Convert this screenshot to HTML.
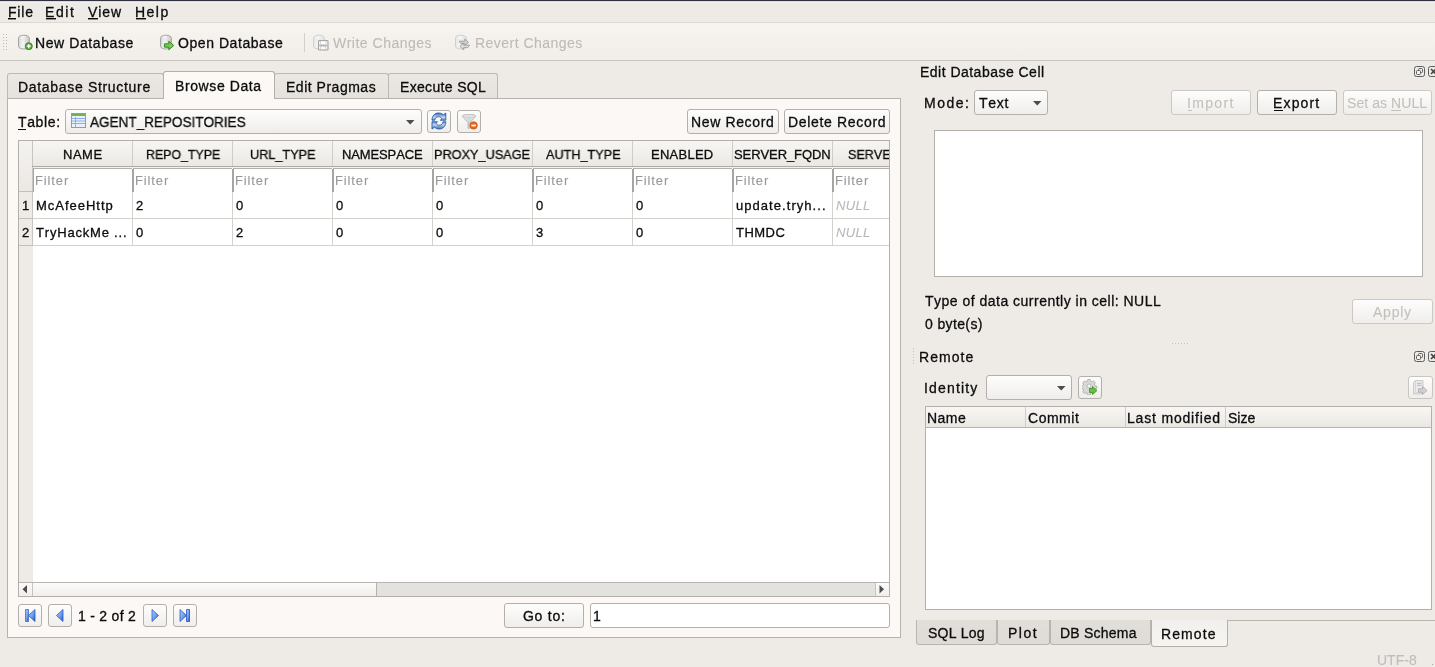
<!DOCTYPE html>
<html><head><meta charset="utf-8"><title>DB Browser for SQLite</title>
<style>
html,body{margin:0;padding:0;}
body{width:1435px;height:667px;overflow:hidden;position:relative;background:#eeebe7;font-family:"Liberation Sans",sans-serif;font-size:14px;line-height:16px;color:#0c0c0c;font-kerning:none;}
body div, body svg{position:absolute;box-sizing:border-box;}
.t{position:absolute;white-space:pre;will-change:transform;-webkit-text-stroke:0.3px currentColor;}
</style></head><body>
<div style="left:0px;top:0px;width:1435px;height:1px;background:#2f3140"></div>
<div style="left:0px;top:1px;width:1435px;height:1px;background:#dfdcd8"></div>
<div style="left:0px;top:2px;width:1435px;height:1px;background:#f2efeb"></div>
<div style="left:0px;top:3px;width:1435px;height:19px;background:#eeebe7"></div>
<div style="left:0px;top:22px;width:1435px;height:1px;background:#dcd8d3"></div>
<div style="left:0px;top:23px;width:1435px;height:37px;background:linear-gradient(#f7f4f0,#f1eeea)"></div>
<div style="left:0px;top:60px;width:1435px;height:1px;background:#c9c5c0"></div>
<span class="t" style="left:7.65px;top:4.00px;color:#0c0c0c;letter-spacing:0.804px;">File</span>
<div style="left:8px;top:18px;width:8px;height:1px;background:#0c0c0c"></div>
<div style="left:8px;top:19px;width:8px;height:1px;background:#8a8a8a"></div>
<span class="t" style="left:45.25px;top:4.00px;color:#0c0c0c;letter-spacing:1.576px;">Edit</span>
<div style="left:46px;top:18px;width:10px;height:1px;background:#0c0c0c"></div>
<div style="left:46px;top:19px;width:10px;height:1px;background:#8a8a8a"></div>
<span class="t" style="left:87.74px;top:4.00px;color:#0c0c0c;letter-spacing:0.961px;">View</span>
<div style="left:88px;top:18px;width:10px;height:1px;background:#0c0c0c"></div>
<div style="left:88px;top:19px;width:10px;height:1px;background:#8a8a8a"></div>
<span class="t" style="left:134.85px;top:4.00px;color:#0c0c0c;letter-spacing:1.481px;">Help</span>
<div style="left:136px;top:18px;width:10px;height:1px;background:#0c0c0c"></div>
<div style="left:136px;top:19px;width:10px;height:1px;background:#8a8a8a"></div>
<div style="left:3px;top:34px;width:1px;height:1px;background:#bcb8b3"></div>
<div style="left:6px;top:34px;width:1px;height:1px;background:#bcb8b3"></div>
<div style="left:3px;top:37px;width:1px;height:1px;background:#bcb8b3"></div>
<div style="left:6px;top:37px;width:1px;height:1px;background:#bcb8b3"></div>
<div style="left:3px;top:40px;width:1px;height:1px;background:#bcb8b3"></div>
<div style="left:6px;top:40px;width:1px;height:1px;background:#bcb8b3"></div>
<div style="left:3px;top:43px;width:1px;height:1px;background:#bcb8b3"></div>
<div style="left:6px;top:43px;width:1px;height:1px;background:#bcb8b3"></div>
<div style="left:3px;top:46px;width:1px;height:1px;background:#bcb8b3"></div>
<div style="left:6px;top:46px;width:1px;height:1px;background:#bcb8b3"></div>
<div style="left:3px;top:49px;width:1px;height:1px;background:#bcb8b3"></div>
<div style="left:6px;top:49px;width:1px;height:1px;background:#bcb8b3"></div>
<svg width="17" height="17" viewBox="0 0 17 17" style="position:absolute;left:17px;top:34px">
<defs><linearGradient id="cg1" x1="0" x2="1"><stop offset="0" stop-color="#d4d4d4"/><stop offset=".4" stop-color="#f6f6f6"/><stop offset="1" stop-color="#c4c4c4"/></linearGradient></defs>
<path d="M1.5 3.8 v8.6 c0 1.5 2.4 2.6 5.4 2.6 s5.4 -1.1 5.4 -2.6 v-8.6 c0 -1.5 -2.4 -2.6 -5.4 -2.6 s-5.4 1.1 -5.4 2.6z" fill="url(#cg1)" stroke="#a6a6a6" stroke-width="1"/>
<path d="M2 4.2 c0.8 1.2 2.6 1.7 4.9 1.7 s4.1 -0.5 4.9 -1.7" fill="none" stroke="#dcdcdc" stroke-width=".6"/>
<circle cx="11.8" cy="12.2" r="3.5" fill="#58a83a" stroke="#2f7d1c" stroke-width=".8"/><path d="M11.8 10.1v4.2M9.7 12.2h4.2" stroke="#fff" stroke-width="1.3"/></svg>
<span class="t" style="left:35.35px;top:35.00px;color:#0c0c0c;letter-spacing:0.595px;">New Database</span>
<svg width="17" height="17" viewBox="0 0 17 17" style="position:absolute;left:159px;top:34px">
<defs><linearGradient id="cg2" x1="0" x2="1"><stop offset="0" stop-color="#d4d4d4"/><stop offset=".4" stop-color="#f6f6f6"/><stop offset="1" stop-color="#c4c4c4"/></linearGradient></defs>
<path d="M1.5 3.8 v8.6 c0 1.5 2.4 2.6 5.4 2.6 s5.4 -1.1 5.4 -2.6 v-8.6 c0 -1.5 -2.4 -2.6 -5.4 -2.6 s-5.4 1.1 -5.4 2.6z" fill="url(#cg2)" stroke="#a6a6a6" stroke-width="1"/>
<path d="M2 4.2 c0.8 1.2 2.6 1.7 4.9 1.7 s4.1 -0.5 4.9 -1.7" fill="none" stroke="#dcdcdc" stroke-width=".6"/>
<path d="M5.5 9.8h4.3v-2.6l5 4.3-5 4.3v-2.6h-4.3z" fill="#7cc65a" stroke="#2e8d1a" stroke-width="1" stroke-linejoin="round"/></svg>
<span class="t" style="left:177.84px;top:35.00px;color:#0c0c0c;letter-spacing:0.560px;">Open Database</span>
<div style="left:304px;top:33px;width:1px;height:19px;background:#d2cec9"></div>
<svg width="17" height="17" viewBox="0 0 17 17" style="position:absolute;left:312px;top:34px">
<defs><linearGradient id="cg3" x1="0" x2="1"><stop offset="0" stop-color="#e6e6e6"/><stop offset=".4" stop-color="#f6f6f6"/><stop offset="1" stop-color="#e0e0e0"/></linearGradient></defs>
<path d="M1.5 3.8 v8.6 c0 1.5 2.4 2.6 5.4 2.6 s5.4 -1.1 5.4 -2.6 v-8.6 c0 -1.5 -2.4 -2.6 -5.4 -2.6 s-5.4 1.1 -5.4 2.6z" fill="url(#cg3)" stroke="#cfcfcf" stroke-width="1"/>
<path d="M2 4.2 c0.8 1.2 2.6 1.7 4.9 1.7 s4.1 -0.5 4.9 -1.7" fill="none" stroke="#e6e6e6" stroke-width=".6"/>
<rect x="6.5" y="6.5" width="9.5" height="9.5" rx=".8" fill="#f4f4f4" stroke="#a4a4a4" stroke-width="1.1"/><rect x="8.6" y="7" width="5.4" height="3.4" fill="#fff" stroke="#bcbcbc" stroke-width=".5"/><rect x="8.8" y="12.4" width="5" height="3" fill="#fff" stroke="#b4b4b4" stroke-width=".6"/><rect x="6.5" y="10.8" width="9.5" height="1.2" fill="#b9b9b9"/></svg>
<span class="t" style="left:333.44px;top:35.00px;color:#bdb9b4;letter-spacing:0.498px;-webkit-text-stroke:0.1px currentColor;">Write Changes</span>
<svg width="17" height="17" viewBox="0 0 17 17" style="position:absolute;left:454px;top:34px">
<defs><linearGradient id="cg4" x1="0" x2="1"><stop offset="0" stop-color="#e6e6e6"/><stop offset=".4" stop-color="#f6f6f6"/><stop offset="1" stop-color="#e0e0e0"/></linearGradient></defs>
<path d="M1.5 3.8 v8.6 c0 1.5 2.4 2.6 5.4 2.6 s5.4 -1.1 5.4 -2.6 v-8.6 c0 -1.5 -2.4 -2.6 -5.4 -2.6 s-5.4 1.1 -5.4 2.6z" fill="url(#cg4)" stroke="#cfcfcf" stroke-width="1"/>
<path d="M2 4.2 c0.8 1.2 2.6 1.7 4.9 1.7 s4.1 -0.5 4.9 -1.7" fill="none" stroke="#e6e6e6" stroke-width=".6"/>
<path d="M5 7.2 h5.8 v-2.2 l3.8 3.4 -3.8 3.4 v-2.2 h-4 z" fill="#cfcfcf" stroke="#a2a2a2" stroke-width=".9" stroke-linejoin="round"/><path d="M15.5 11.2 h-5.8 v-2.2 l-3.8 3.4 3.8 3.4 v-2.2 h4 z" fill="#e0e0e0" stroke="#9a9a9a" stroke-width=".9" stroke-linejoin="round"/></svg>
<span class="t" style="left:474.55px;top:35.00px;color:#bdb9b4;letter-spacing:0.476px;-webkit-text-stroke:0.1px currentColor;">Revert Changes</span>
<div style="left:7px;top:98px;width:894px;height:540px;border:1px solid #b5b1ac;background:#fbf8f5"></div>
<div style="left:7px;top:73px;width:157px;height:25px;border:1px solid #bcb8b3;border-bottom:none;border-radius:3px 3px 0 0;background:linear-gradient(#ebe8e4,#e5e2de);"></div>
<div style="left:274px;top:73px;width:115px;height:25px;border:1px solid #bcb8b3;border-bottom:none;border-radius:3px 3px 0 0;background:linear-gradient(#ebe8e4,#e5e2de);"></div>
<div style="left:388px;top:73px;width:110px;height:25px;border:1px solid #bcb8b3;border-bottom:none;border-radius:3px 3px 0 0;background:linear-gradient(#ebe8e4,#e5e2de);"></div>
<div style="left:163px;top:71px;width:112px;height:28px;border:1px solid #b3afaa;border-bottom:none;border-radius:3px 3px 0 0;background:#fbf8f5"></div>
<span class="t" style="left:18.45px;top:79.00px;color:#0c0c0c;letter-spacing:0.679px;">Database Structure</span>
<span class="t" style="left:174.85px;top:78.00px;color:#0c0c0c;letter-spacing:0.600px;">Browse Data</span>
<span class="t" style="left:285.85px;top:79.00px;color:#0c0c0c;letter-spacing:0.511px;">Edit Pragmas</span>
<span class="t" style="left:399.65px;top:79.00px;color:#0c0c0c;letter-spacing:0.332px;">Execute SQL</span>
<span class="t" style="left:17.89px;top:114.00px;color:#0c0c0c;letter-spacing:0.637px;">Table:</span>
<div style="left:18px;top:129px;width:8px;height:1px;background:#0c0c0c"></div>
<div style="left:65px;top:109px;width:357px;height:25px;border:1px solid #b3afaa;border-radius:3px;background:linear-gradient(#fdfdfc,#efedea)"></div>
<svg width="15" height="15" viewBox="0 0 15 15" style="position:absolute;left:71px;top:113px">
<rect x=".5" y=".5" width="14" height="14" fill="#e8f0fb" stroke="#7a9fd6"/>
<rect x="1" y="1" width="13" height="2" fill="#6cb35a"/>
<path d="M1 5.5h13M1 8h13M1 10.5h13M4.5 4v10" stroke="#8fb0e0" stroke-width="1"/>
</svg>
<span class="t" style="left:89.97px;top:114.00px;color:#0c0c0c;transform:scaleX(0.9665);transform-origin:0 0;">AGENT_REPOSITORIES</span>
<svg width="9" height="5" style="position:absolute;left:406px;top:120px"><path d="M0 0h8.5L4.25 4.5z" fill="#4d4d4d"/></svg>
<div style="left:427px;top:110px;width:24px;height:23px;border:1px solid #b3afaa;border-radius:3px;background:linear-gradient(#fdfdfd,#f0eeeb);"></div>
<svg width="18" height="18" viewBox="0 0 18 18" style="position:absolute;left:431px;top:112px">
<defs><linearGradient id="rg1" x1="0" y1="0" x2="0" y2="1"><stop offset="0" stop-color="#3569b4"/><stop offset=".6" stop-color="#c4d7f0"/><stop offset="1" stop-color="#5a8cca"/></linearGradient>
<linearGradient id="rg2" x1="0" y1="1" x2="0" y2="0"><stop offset="0" stop-color="#2d62b0"/><stop offset=".55" stop-color="#b9d0ee"/><stop offset="1" stop-color="#3d72bd"/></linearGradient></defs>
<path d="M1 8.2 C1 3.7 4 1 7.5 1 C9.5 1 11 1.7 12.3 2.8 L14.8 1 V8.2 H9.3 L10.9 6.7 C10 5.5 8.8 4.7 7.5 4.7 C5.6 4.7 4 6.1 3.7 8.2 Z" fill="url(#rg1)" stroke="#2a5ea8" stroke-width=".9" stroke-linejoin="round"/>
<path transform="rotate(180 7.9 9)" d="M1 8.2 C1 3.7 4 1 7.5 1 C9.5 1 11 1.7 12.3 2.8 L14.8 1 V8.2 H9.3 L10.9 6.7 C10 5.5 8.8 4.7 7.5 4.7 C5.6 4.7 4 6.1 3.7 8.2 Z" fill="url(#rg1)" stroke="#2a5ea8" stroke-width=".9" stroke-linejoin="round"/>
</svg>
<div style="left:457px;top:110px;width:24px;height:23px;border:1px solid #b3afaa;border-radius:3px;background:linear-gradient(#fdfdfd,#f0eeeb);"></div>
<svg width="18" height="18" viewBox="0 0 18 18" style="position:absolute;left:461px;top:113px">
<defs><linearGradient id="fg1" x1="0" x2="1"><stop offset="0" stop-color="#f2f2f2"/><stop offset=".5" stop-color="#d6d6d6"/><stop offset="1" stop-color="#f0f0f0"/></linearGradient></defs>
<path d="M1.2 3.2 C1.2 0.9 14.8 0.9 14.8 3.2 L9 9.5 V15.2 H7 V9.5 Z" fill="url(#fg1)" stroke="#b4b4b4" stroke-width=".9" stroke-linejoin="round"/>
<ellipse cx="8" cy="3.1" rx="6.3" ry="1.6" fill="#e2e2e2" stroke="#c4c4c4" stroke-width=".6"/>
<circle cx="12.6" cy="12.4" r="3.7" fill="#e86a1c" stroke="#c4520e" stroke-width=".7"/>
<rect x="10.4" y="11.7" width="4.4" height="1.6" fill="#fff"/>
</svg>
<div style="left:687px;top:109px;width:92px;height:25px;border:1px solid #b3afaa;border-radius:3px;background:linear-gradient(#fdfdfd,#f0eeeb);"></div>
<span class="t" style="left:690.95px;top:114.00px;color:#0c0c0c;letter-spacing:0.636px;">New Record</span>
<div style="left:784px;top:109px;width:106px;height:25px;border:1px solid #b3afaa;border-radius:3px;background:linear-gradient(#fdfdfd,#f0eeeb);"></div>
<span class="t" style="left:787.85px;top:114.00px;color:#0c0c0c;letter-spacing:0.672px;">Delete Record</span>
<div style="left:18px;top:140px;width:872px;height:457px;border:1px solid #b3afaa;background:#fff"></div>
<div style="left:19px;top:141px;width:14px;height:441px;background:#eeebe7"></div>
<div style="left:32px;top:141px;width:1px;height:105px;background:#c8c4bf"></div>
<div style="left:33px;top:141px;width:856px;height:25px;background:linear-gradient(#f8f6f3,#ebe8e4)"></div>
<div style="left:19px;top:166px;width:870px;height:1px;background:#aeaaa5"></div>
<div style="left:19px;top:141px;width:13px;height:50px;background:linear-gradient(#f4f2ef,#ebe8e4)"></div>
<div style="left:19px;top:191px;width:14px;height:1px;background:#c3bfba"></div>
<div style="left:132px;top:141px;width:1px;height:25px;background:#d0ccc7"></div>
<div style="left:232px;top:141px;width:1px;height:25px;background:#d0ccc7"></div>
<div style="left:332px;top:141px;width:1px;height:25px;background:#d0ccc7"></div>
<div style="left:432px;top:141px;width:1px;height:25px;background:#d0ccc7"></div>
<div style="left:532px;top:141px;width:1px;height:25px;background:#d0ccc7"></div>
<div style="left:632px;top:141px;width:1px;height:25px;background:#d0ccc7"></div>
<div style="left:732px;top:141px;width:1px;height:25px;background:#d0ccc7"></div>
<div style="left:832px;top:141px;width:1px;height:25px;background:#d0ccc7"></div>
<span class="t" style="left:62.53px;top:147.93px;color:#0c0c0c;font-size:13.00px;line-height:14.86px;letter-spacing:0.522px;">NAME</span>
<span class="t" style="left:145.59px;top:147.93px;color:#0c0c0c;font-size:13.00px;line-height:14.86px;transform:scaleX(0.9516);transform-origin:0 0;">REPO_TYPE</span>
<span class="t" style="left:250.02px;top:147.93px;color:#0c0c0c;font-size:13.00px;line-height:14.86px;transform:scaleX(0.9752);transform-origin:0 0;">URL_TYPE</span>
<span class="t" style="left:341.93px;top:147.93px;color:#0c0c0c;font-size:13.00px;line-height:14.86px;letter-spacing:-0.126px;">NAMESPACE</span>
<span class="t" style="left:434.46px;top:147.93px;color:#0c0c0c;font-size:13.00px;line-height:14.86px;transform:scaleX(0.9780);transform-origin:0 0;">PROXY_USAGE</span>
<span class="t" style="left:545.98px;top:147.93px;color:#0c0c0c;font-size:13.00px;line-height:14.86px;transform:scaleX(0.9738);transform-origin:0 0;">AUTH_TYPE</span>
<span class="t" style="left:651.43px;top:147.93px;color:#0c0c0c;font-size:13.00px;line-height:14.86px;letter-spacing:0.250px;">ENABLED</span>
<span class="t" style="left:734.41px;top:147.93px;color:#0c0c0c;font-size:13.00px;line-height:14.86px;letter-spacing:-0.087px;">SERVER_FQDN</span>
<div style="left:833px;top:141px;width:56px;height:25px;overflow:hidden">
<span class="t" style="left:14.93px;top:6.93px;color:#0c0c0c;font-size:13.00px;line-height:14.86px;transform:scaleX(0.9672);transform-origin:0 0;">SERVER_</span>
</div>
<div style="left:33px;top:167px;width:856px;height:1px;background:#f3f1ee"></div>
<div style="left:33px;top:168px;width:99px;height:24px;background:#fff"></div>
<div style="left:33px;top:168px;width:99px;height:1px;background:#b4b0ab"></div>
<div style="left:33px;top:169px;width:1px;height:23px;background:#a8a49f"></div>
<div style="left:33px;top:168px;width:99px;height:23px;overflow:hidden">
<span class="t" style="left:2.43px;top:5.93px;color:#999999;font-size:13.00px;line-height:14.86px;letter-spacing:0.879px;-webkit-text-stroke:0.1px currentColor;">Filter</span>
</div>
<div style="left:133px;top:168px;width:99px;height:24px;background:#fff"></div>
<div style="left:133px;top:168px;width:99px;height:1px;background:#b4b0ab"></div>
<div style="left:132px;top:169px;width:2px;height:23px;background:#a8a49f"></div>
<div style="left:133px;top:168px;width:99px;height:23px;overflow:hidden">
<span class="t" style="left:2.43px;top:5.93px;color:#999999;font-size:13.00px;line-height:14.86px;letter-spacing:0.879px;-webkit-text-stroke:0.1px currentColor;">Filter</span>
</div>
<div style="left:233px;top:168px;width:99px;height:24px;background:#fff"></div>
<div style="left:233px;top:168px;width:99px;height:1px;background:#b4b0ab"></div>
<div style="left:232px;top:169px;width:2px;height:23px;background:#a8a49f"></div>
<div style="left:233px;top:168px;width:99px;height:23px;overflow:hidden">
<span class="t" style="left:2.43px;top:5.93px;color:#999999;font-size:13.00px;line-height:14.86px;letter-spacing:0.879px;-webkit-text-stroke:0.1px currentColor;">Filter</span>
</div>
<div style="left:333px;top:168px;width:99px;height:24px;background:#fff"></div>
<div style="left:333px;top:168px;width:99px;height:1px;background:#b4b0ab"></div>
<div style="left:332px;top:169px;width:2px;height:23px;background:#a8a49f"></div>
<div style="left:333px;top:168px;width:99px;height:23px;overflow:hidden">
<span class="t" style="left:2.43px;top:5.93px;color:#999999;font-size:13.00px;line-height:14.86px;letter-spacing:0.879px;-webkit-text-stroke:0.1px currentColor;">Filter</span>
</div>
<div style="left:433px;top:168px;width:99px;height:24px;background:#fff"></div>
<div style="left:433px;top:168px;width:99px;height:1px;background:#b4b0ab"></div>
<div style="left:432px;top:169px;width:2px;height:23px;background:#a8a49f"></div>
<div style="left:433px;top:168px;width:99px;height:23px;overflow:hidden">
<span class="t" style="left:2.43px;top:5.93px;color:#999999;font-size:13.00px;line-height:14.86px;letter-spacing:0.879px;-webkit-text-stroke:0.1px currentColor;">Filter</span>
</div>
<div style="left:533px;top:168px;width:99px;height:24px;background:#fff"></div>
<div style="left:533px;top:168px;width:99px;height:1px;background:#b4b0ab"></div>
<div style="left:532px;top:169px;width:2px;height:23px;background:#a8a49f"></div>
<div style="left:533px;top:168px;width:99px;height:23px;overflow:hidden">
<span class="t" style="left:2.43px;top:5.93px;color:#999999;font-size:13.00px;line-height:14.86px;letter-spacing:0.879px;-webkit-text-stroke:0.1px currentColor;">Filter</span>
</div>
<div style="left:633px;top:168px;width:99px;height:24px;background:#fff"></div>
<div style="left:633px;top:168px;width:99px;height:1px;background:#b4b0ab"></div>
<div style="left:632px;top:169px;width:2px;height:23px;background:#a8a49f"></div>
<div style="left:633px;top:168px;width:99px;height:23px;overflow:hidden">
<span class="t" style="left:2.43px;top:5.93px;color:#999999;font-size:13.00px;line-height:14.86px;letter-spacing:0.879px;-webkit-text-stroke:0.1px currentColor;">Filter</span>
</div>
<div style="left:733px;top:168px;width:99px;height:24px;background:#fff"></div>
<div style="left:733px;top:168px;width:99px;height:1px;background:#b4b0ab"></div>
<div style="left:732px;top:169px;width:2px;height:23px;background:#a8a49f"></div>
<div style="left:733px;top:168px;width:99px;height:23px;overflow:hidden">
<span class="t" style="left:2.43px;top:5.93px;color:#999999;font-size:13.00px;line-height:14.86px;letter-spacing:0.879px;-webkit-text-stroke:0.1px currentColor;">Filter</span>
</div>
<div style="left:833px;top:168px;width:56px;height:24px;background:#fff"></div>
<div style="left:833px;top:168px;width:56px;height:1px;background:#b4b0ab"></div>
<div style="left:832px;top:169px;width:2px;height:23px;background:#a8a49f"></div>
<div style="left:833px;top:168px;width:56px;height:23px;overflow:hidden">
<span class="t" style="left:2.43px;top:5.93px;color:#999999;font-size:13.00px;line-height:14.86px;letter-spacing:0.879px;-webkit-text-stroke:0.1px currentColor;">Filter</span>
</div>
<div style="left:19px;top:218px;width:870px;height:1px;background:#d5d2ce"></div>
<div style="left:19px;top:218px;width:14px;height:1px;background:#c3bfba"></div>
<span class="t" style="left:21.51px;top:198.93px;color:#0c0c0c;font-size:13.00px;line-height:14.86px;">1</span>
<div style="left:32px;top:192px;width:1px;height:26px;background:#c8c4bf"></div>
<span class="t" style="left:35.53px;top:198.93px;color:#0c0c0c;font-size:13.00px;line-height:14.86px;letter-spacing:0.986px;">McAfeeHttp</span>
<div style="left:132px;top:192px;width:1px;height:26px;background:#d5d2ce"></div>
<span class="t" style="left:135.95px;top:198.93px;color:#0c0c0c;font-size:13.00px;line-height:14.86px;">2</span>
<div style="left:232px;top:192px;width:1px;height:26px;background:#d5d2ce"></div>
<span class="t" style="left:236.09px;top:198.93px;color:#0c0c0c;font-size:13.00px;line-height:14.86px;">0</span>
<div style="left:332px;top:192px;width:1px;height:26px;background:#d5d2ce"></div>
<span class="t" style="left:336.09px;top:198.93px;color:#0c0c0c;font-size:13.00px;line-height:14.86px;">0</span>
<div style="left:432px;top:192px;width:1px;height:26px;background:#d5d2ce"></div>
<span class="t" style="left:436.09px;top:198.93px;color:#0c0c0c;font-size:13.00px;line-height:14.86px;">0</span>
<div style="left:532px;top:192px;width:1px;height:26px;background:#d5d2ce"></div>
<span class="t" style="left:536.09px;top:198.93px;color:#0c0c0c;font-size:13.00px;line-height:14.86px;">0</span>
<div style="left:632px;top:192px;width:1px;height:26px;background:#d5d2ce"></div>
<span class="t" style="left:636.09px;top:198.93px;color:#0c0c0c;font-size:13.00px;line-height:14.86px;">0</span>
<div style="left:732px;top:192px;width:1px;height:26px;background:#d5d2ce"></div>
<span class="t" style="left:735.76px;top:198.93px;color:#0c0c0c;font-size:13.00px;line-height:14.86px;letter-spacing:1.050px;">update.tryh...</span>
<div style="left:832px;top:192px;width:1px;height:26px;background:#d5d2ce"></div>
<span class="t" style="left:836.10px;top:198.93px;color:#b9b9b9;font-size:13.00px;line-height:14.86px;letter-spacing:0.357px;font-style:italic;-webkit-text-stroke:0.1px currentColor;">NULL</span>
<div style="left:19px;top:245px;width:870px;height:1px;background:#d5d2ce"></div>
<div style="left:19px;top:245px;width:14px;height:1px;background:#c3bfba"></div>
<span class="t" style="left:21.85px;top:225.93px;color:#0c0c0c;font-size:13.00px;line-height:14.86px;">2</span>
<div style="left:32px;top:219px;width:1px;height:26px;background:#c8c4bf"></div>
<span class="t" style="left:36.31px;top:225.93px;color:#0c0c0c;font-size:13.00px;line-height:14.86px;letter-spacing:0.806px;">TryHackMe ...</span>
<div style="left:132px;top:219px;width:1px;height:26px;background:#d5d2ce"></div>
<span class="t" style="left:136.09px;top:225.93px;color:#0c0c0c;font-size:13.00px;line-height:14.86px;">0</span>
<div style="left:232px;top:219px;width:1px;height:26px;background:#d5d2ce"></div>
<span class="t" style="left:235.95px;top:225.93px;color:#0c0c0c;font-size:13.00px;line-height:14.86px;">2</span>
<div style="left:332px;top:219px;width:1px;height:26px;background:#d5d2ce"></div>
<span class="t" style="left:336.09px;top:225.93px;color:#0c0c0c;font-size:13.00px;line-height:14.86px;">0</span>
<div style="left:432px;top:219px;width:1px;height:26px;background:#d5d2ce"></div>
<span class="t" style="left:436.09px;top:225.93px;color:#0c0c0c;font-size:13.00px;line-height:14.86px;">0</span>
<div style="left:532px;top:219px;width:1px;height:26px;background:#d5d2ce"></div>
<span class="t" style="left:536.10px;top:225.93px;color:#0c0c0c;font-size:13.00px;line-height:14.86px;">3</span>
<div style="left:632px;top:219px;width:1px;height:26px;background:#d5d2ce"></div>
<span class="t" style="left:636.09px;top:225.93px;color:#0c0c0c;font-size:13.00px;line-height:14.86px;">0</span>
<div style="left:732px;top:219px;width:1px;height:26px;background:#d5d2ce"></div>
<span class="t" style="left:736.31px;top:225.93px;color:#0c0c0c;font-size:13.00px;line-height:14.86px;letter-spacing:0.479px;">THMDC</span>
<div style="left:832px;top:219px;width:1px;height:26px;background:#d5d2ce"></div>
<span class="t" style="left:836.10px;top:225.93px;color:#b9b9b9;font-size:13.00px;line-height:14.86px;letter-spacing:0.357px;font-style:italic;-webkit-text-stroke:0.1px currentColor;">NULL</span>
<div style="left:19px;top:582px;width:870px;height:1px;background:#b8b4af"></div>
<div style="left:19px;top:583px;width:870px;height:13px;background:#e4e2de"></div>
<div style="left:19px;top:583px;width:13px;height:13px;background:linear-gradient(#fbfaf8,#f1efec)"></div>
<div style="left:32px;top:583px;width:1px;height:13px;background:#c8c4bf"></div>
<svg width="6" height="9" style="position:absolute;left:22px;top:585px"><path d="M5 0v8.5L0.5 4.25z" fill="#4d4d4d"/></svg>
<div style="left:33px;top:583px;width:343px;height:13px;background:linear-gradient(#fbfbfa,#f2efeb)"></div>
<div style="left:376px;top:583px;width:1px;height:13px;background:#b5b1ac"></div>
<div style="left:875px;top:583px;width:1px;height:13px;background:#c8c4bf"></div>
<div style="left:876px;top:583px;width:13px;height:13px;background:linear-gradient(#fbfaf8,#f1efec)"></div>
<svg width="6" height="9" style="position:absolute;left:879px;top:585px"><path d="M0.5 0v8.5L5 4.25z" fill="#4d4d4d"/></svg>
<div style="left:18px;top:604px;width:24px;height:23px;border:1px solid #b3afaa;border-radius:3px;background:linear-gradient(#fdfdfd,#f0eeeb);"></div>
<svg width="14" height="15" viewBox="0 0 14 15" style="position:absolute;left:23px;top:608px"><defs><linearGradient id="ng1" x1="0" y1="0" x2="1" y2="1"><stop offset="0" stop-color="#b4cff5"/><stop offset=".55" stop-color="#6f9fe6"/><stop offset="1" stop-color="#1f4fc9"/></linearGradient></defs><path d="M2.5 1.5h3v12h-3z" fill="url(#ng1)" stroke="#3a6fd6" stroke-width=".8"/><path d="M12 1.5v12L5.5 7.5z" fill="url(#ng1)" stroke="#2858cc" stroke-width=".8" stroke-linejoin="round"/></svg>
<div style="left:48px;top:604px;width:24px;height:23px;border:1px solid #b3afaa;border-radius:3px;background:linear-gradient(#fdfdfd,#f0eeeb);"></div>
<svg width="14" height="15" viewBox="0 0 14 15" style="position:absolute;left:53px;top:608px"><defs><linearGradient id="ng2" x1="0" y1="0" x2="1" y2="1"><stop offset="0" stop-color="#b4cff5"/><stop offset=".55" stop-color="#6f9fe6"/><stop offset="1" stop-color="#1f4fc9"/></linearGradient></defs><path d="M10 1.5v12L3.5 7.5z" fill="url(#ng2)" stroke="#2858cc" stroke-width=".8" stroke-linejoin="round"/></svg>
<div style="left:143px;top:604px;width:24px;height:23px;border:1px solid #b3afaa;border-radius:3px;background:linear-gradient(#fdfdfd,#f0eeeb);"></div>
<svg width="14" height="15" viewBox="0 0 14 15" style="position:absolute;left:148px;top:608px"><defs><linearGradient id="ng3" x1="0" y1="0" x2="1" y2="1"><stop offset="0" stop-color="#b4cff5"/><stop offset=".55" stop-color="#6f9fe6"/><stop offset="1" stop-color="#1f4fc9"/></linearGradient></defs><path d="M4 1.5v12L10.5 7.5z" fill="url(#ng3)" stroke="#2858cc" stroke-width=".8" stroke-linejoin="round"/></svg>
<div style="left:173px;top:604px;width:24px;height:23px;border:1px solid #b3afaa;border-radius:3px;background:linear-gradient(#fdfdfd,#f0eeeb);"></div>
<svg width="14" height="15" viewBox="0 0 14 15" style="position:absolute;left:178px;top:608px"><defs><linearGradient id="ng4" x1="0" y1="0" x2="1" y2="1"><stop offset="0" stop-color="#b4cff5"/><stop offset=".55" stop-color="#6f9fe6"/><stop offset="1" stop-color="#1f4fc9"/></linearGradient></defs><path d="M2 1.5v12L8.5 7.5z" fill="url(#ng4)" stroke="#2858cc" stroke-width=".8" stroke-linejoin="round"/><path d="M8.5 1.5h3v12h-3z" fill="url(#ng4)" stroke="#2050c8" stroke-width=".8"/></svg>
<span class="t" style="left:78.03px;top:608.00px;color:#0c0c0c;letter-spacing:0.280px;">1 - 2 of 2</span>
<div style="left:504px;top:603px;width:80px;height:25px;border:1px solid #b3afaa;border-radius:3px;background:linear-gradient(#fdfdfd,#f0eeeb);"></div>
<span class="t" style="left:523.10px;top:607.50px;color:#0c0c0c;letter-spacing:0.730px;">Go to:</span>
<div style="left:590px;top:603px;width:300px;height:25px;border:1px solid #b3afaa;border-radius:3px;background:#fff"></div>
<span class="t" style="left:593.43px;top:608.00px;color:#0c0c0c;">1</span>
<span class="t" style="left:919.65px;top:64.00px;color:#0c0c0c;letter-spacing:0.478px;">Edit Database Cell</span>
<svg width="11" height="11" viewBox="0 0 11 11" style="position:absolute;left:1414px;top:66px">
<rect x=".5" y=".5" width="10" height="10" rx="2" fill="none" stroke="#5e5e5e" stroke-width="1"/><rect x="4.5" y="2.5" width="4" height="4" rx="1" fill="none" stroke="#5e5e5e"/><rect x="2.5" y="4.5" width="4" height="4" rx="1" fill="#f4f2ef" stroke="#5e5e5e"/></svg>
<svg width="11" height="11" viewBox="0 0 11 11" style="position:absolute;left:1428px;top:66px">
<rect x=".5" y=".5" width="10" height="10" rx="2" fill="none" stroke="#5e5e5e" stroke-width="1"/><path d="M3 3l5 5M8 3l-5 5" stroke="#4a4a4a" stroke-width="1.7"/></svg>
<span class="t" style="left:924.45px;top:95.00px;color:#0c0c0c;letter-spacing:1.504px;">Mode:</span>
<div style="left:974px;top:90px;width:74px;height:25px;border:1px solid #b3afaa;border-radius:3px;background:linear-gradient(#fdfdfd,#f0eeeb);"></div>
<span class="t" style="left:978.69px;top:95.00px;color:#0c0c0c;letter-spacing:0.730px;">Text</span>
<svg width="9" height="5" style="position:absolute;left:1033px;top:101px"><path d="M0 0h8.5L4.25 4.5z" fill="#4d4d4d"/></svg>
<div style="left:1171px;top:90px;width:80px;height:25px;border:1px solid #b3afaa;border-radius:3px;background:linear-gradient(#fdfdfd,#f0eeeb);border-color:#ccc8c3;"></div>
<span class="t" style="left:1187.21px;top:95.00px;color:#c3bfba;letter-spacing:1.344px;-webkit-text-stroke:0.1px currentColor;">Import</span>
<div style="left:1188px;top:110px;width:4px;height:1px;background:#c3bfba"></div>
<div style="left:1257px;top:90px;width:80px;height:25px;border:1px solid #b3afaa;border-radius:3px;background:linear-gradient(#fdfdfd,#f0eeeb);"></div>
<span class="t" style="left:1273.45px;top:95.00px;color:#0c0c0c;letter-spacing:1.158px;">Export</span>
<div style="left:1274px;top:110px;width:9px;height:1px;background:#0c0c0c"></div>
<div style="left:1343px;top:90px;width:89px;height:25px;border:1px solid #b3afaa;border-radius:3px;background:linear-gradient(#fdfdfd,#f0eeeb);border-color:#ccc8c3;"></div>
<span class="t" style="left:1346.86px;top:95.00px;color:#c3bfba;letter-spacing:0.073px;-webkit-text-stroke:0.1px currentColor;">Set as NULL</span>
<div style="left:1391px;top:110px;width:10px;height:1px;background:#c3bfba"></div>
<div style="left:934px;top:130px;width:489px;height:147px;border:1px solid #b3afaa;background:#fff"></div>
<span class="t" style="left:925.49px;top:292.60px;color:#0c0c0c;letter-spacing:0.489px;">Type of data currently in cell: NULL</span>
<span class="t" style="left:925.25px;top:316.40px;color:#0c0c0c;letter-spacing:0.369px;">0 byte(s)</span>
<div style="left:1352px;top:299px;width:81px;height:25px;border:1px solid #b3afaa;border-radius:3px;background:linear-gradient(#fdfdfd,#f0eeeb);border-color:#ccc8c3;"></div>
<span class="t" style="left:1372.97px;top:304.00px;color:#c3bfba;letter-spacing:0.759px;-webkit-text-stroke:0.1px currentColor;">Apply</span>
<div style="left:1172px;top:343px;width:1px;height:1px;background:#c3bfba"></div>
<div style="left:1175px;top:343px;width:1px;height:1px;background:#c3bfba"></div>
<div style="left:1178px;top:343px;width:1px;height:1px;background:#c3bfba"></div>
<div style="left:1181px;top:343px;width:1px;height:1px;background:#c3bfba"></div>
<div style="left:1184px;top:343px;width:1px;height:1px;background:#c3bfba"></div>
<div style="left:1187px;top:343px;width:1px;height:1px;background:#c3bfba"></div>
<div style="left:913px;top:348px;width:1px;height:1px;background:#c3bfba"></div>
<div style="left:913px;top:351px;width:1px;height:1px;background:#c3bfba"></div>
<div style="left:913px;top:354px;width:1px;height:1px;background:#c3bfba"></div>
<div style="left:913px;top:357px;width:1px;height:1px;background:#c3bfba"></div>
<div style="left:913px;top:360px;width:1px;height:1px;background:#c3bfba"></div>
<div style="left:913px;top:363px;width:1px;height:1px;background:#c3bfba"></div>
<span class="t" style="left:919.45px;top:349.00px;color:#0c0c0c;letter-spacing:1.030px;">Remote</span>
<svg width="11" height="11" viewBox="0 0 11 11" style="position:absolute;left:1414px;top:351px">
<rect x=".5" y=".5" width="10" height="10" rx="2" fill="none" stroke="#5e5e5e" stroke-width="1"/><rect x="4.5" y="2.5" width="4" height="4" rx="1" fill="none" stroke="#5e5e5e"/><rect x="2.5" y="4.5" width="4" height="4" rx="1" fill="#f4f2ef" stroke="#5e5e5e"/></svg>
<svg width="11" height="11" viewBox="0 0 11 11" style="position:absolute;left:1428px;top:351px">
<rect x=".5" y=".5" width="10" height="10" rx="2" fill="none" stroke="#5e5e5e" stroke-width="1"/><path d="M3 3l5 5M8 3l-5 5" stroke="#4a4a4a" stroke-width="1.7"/></svg>
<span class="t" style="left:924.31px;top:380.00px;color:#0c0c0c;letter-spacing:1.169px;">Identity</span>
<div style="left:986px;top:375px;width:86px;height:25px;border:1px solid #b3afaa;border-radius:3px;background:linear-gradient(#fdfdfd,#f0eeeb);"></div>
<svg width="9" height="5" style="position:absolute;left:1057px;top:386px"><path d="M0 0h8.5L4.25 4.5z" fill="#4d4d4d"/></svg>
<div style="left:1078px;top:376px;width:24px;height:23px;border:1px solid #b3afaa;border-radius:3px;background:linear-gradient(#fdfdfd,#f0eeeb);"></div>
<svg width="16" height="16" viewBox="0 0 16 16" style="position:absolute;left:1082px;top:379px">
<g transform="translate(7 7)"><path d="M-1.2 -6.5h2.4l.4 1.7 1.5.7 1.5-.9 1.7 1.7-.9 1.5.7 1.5 1.7.4v2.4l-1.7.4-.7 1.5.9 1.5-1.7 1.7-1.5-.9-1.5.7-.4 1.7h-2.4l-.4-1.7-1.5-.7-1.5.9-1.7-1.7.9-1.5-.7-1.5-1.7-.4v-2.4l1.7-.4.7-1.5-.9-1.5 1.7-1.7 1.5.9 1.5-.7z" fill="#d8d8d8" stroke="#a0a0a0" stroke-width=".7"/>
<circle r="2" fill="#f4f4f4" stroke="#a0a0a0" stroke-width=".6"/></g>
<path d="M7.5 9.5h3v-2l4.5 4-4.5 4v-2h-3z" fill="#6cbf3a" stroke="#2e8a1c" stroke-width=".7"/>
</svg>
<div style="left:1408px;top:376px;width:25px;height:23px;border:1px solid #b3afaa;border-radius:3px;background:linear-gradient(#fdfdfd,#f0eeeb);border-color:#c9c5c0;"></div>
<svg width="18" height="18" viewBox="0 0 18 18" style="position:absolute;left:1412px;top:379px">
<path d="M1.5 3.2 L3.5 1.5 H11 V13.5 L9.5 15 H1.5 Z" fill="#ebebeb" stroke="#c2c2c2" stroke-width=".8"/>
<path d="M3.5 1.5 V13.5 H11 M3.5 13.5 L1.5 15" fill="none" stroke="#cdcdcd" stroke-width=".7"/>
<path d="M5 4.3h4.5M5 6.3h4.5" stroke="#b8b8b8" stroke-width="1"/>
<path d="M6.5 9.8h4v-2.3l4.6 4-4.6 4v-2.3h-4z" fill="#d2d2d2" stroke="#a8a8a8" stroke-width=".8" stroke-linejoin="round"/>
</svg>
<div style="left:925px;top:406px;width:507px;height:204px;border:1px solid #b3afaa;background:#fff"></div>
<div style="left:926px;top:407px;width:505px;height:20px;background:linear-gradient(#f8f6f3,#ebe8e4)"></div>
<div style="left:926px;top:427px;width:505px;height:1px;background:#b8b4af"></div>
<div style="left:1025px;top:407px;width:1px;height:20px;background:#d0ccc7"></div>
<div style="left:1125px;top:407px;width:1px;height:20px;background:#d0ccc7"></div>
<div style="left:1225px;top:407px;width:1px;height:20px;background:#d0ccc7"></div>
<span class="t" style="left:927.35px;top:410.00px;color:#0c0c0c;letter-spacing:0.475px;">Name</span>
<span class="t" style="left:1027.79px;top:410.00px;color:#0c0c0c;letter-spacing:0.519px;">Commit</span>
<span class="t" style="left:1127.35px;top:410.00px;color:#0c0c0c;letter-spacing:0.815px;">Last modified</span>
<span class="t" style="left:1227.86px;top:410.00px;color:#0c0c0c;letter-spacing:0.008px;">Size</span>
<div style="left:916px;top:620px;width:519px;height:1px;background:#b8b4af"></div>
<div style="left:916px;top:620px;width:81px;height:25px;border:1px solid #b8b4af;border-top:none;border-radius:0 0 3px 3px;background:linear-gradient(#e2dfdb,#dedbd7);"></div>
<div style="left:997px;top:620px;width:53px;height:25px;border:1px solid #b8b4af;border-top:none;border-radius:0 0 3px 3px;background:linear-gradient(#e2dfdb,#dedbd7);"></div>
<div style="left:1050px;top:620px;width:101px;height:25px;border:1px solid #b8b4af;border-top:none;border-radius:0 0 3px 3px;background:linear-gradient(#e2dfdb,#dedbd7);"></div>
<div style="left:1151px;top:620px;width:77px;height:27px;border:1px solid #b3afaa;border-top:none;border-radius:0 0 3px 3px;background:linear-gradient(#f2f0ed,#f6f4f1)"></div>
<span class="t" style="left:927.76px;top:625.00px;color:#0c0c0c;letter-spacing:0.213px;">SQL Log</span>
<span class="t" style="left:1007.55px;top:625.00px;color:#0c0c0c;letter-spacing:1.476px;">Plot</span>
<span class="t" style="left:1060.45px;top:625.00px;color:#0c0c0c;letter-spacing:0.219px;">DB Schema</span>
<span class="t" style="left:1161.45px;top:626.00px;color:#0c0c0c;letter-spacing:1.090px;">Remote</span>
<span class="t" style="left:1376.62px;top:652.00px;color:#bdbdbd;letter-spacing:0.007px;-webkit-text-stroke:0.1px currentColor;">UTF-8</span>
<div style="left:1432px;top:664px;width:1px;height:1px;background:#a9a6a2"></div>
</body></html>
